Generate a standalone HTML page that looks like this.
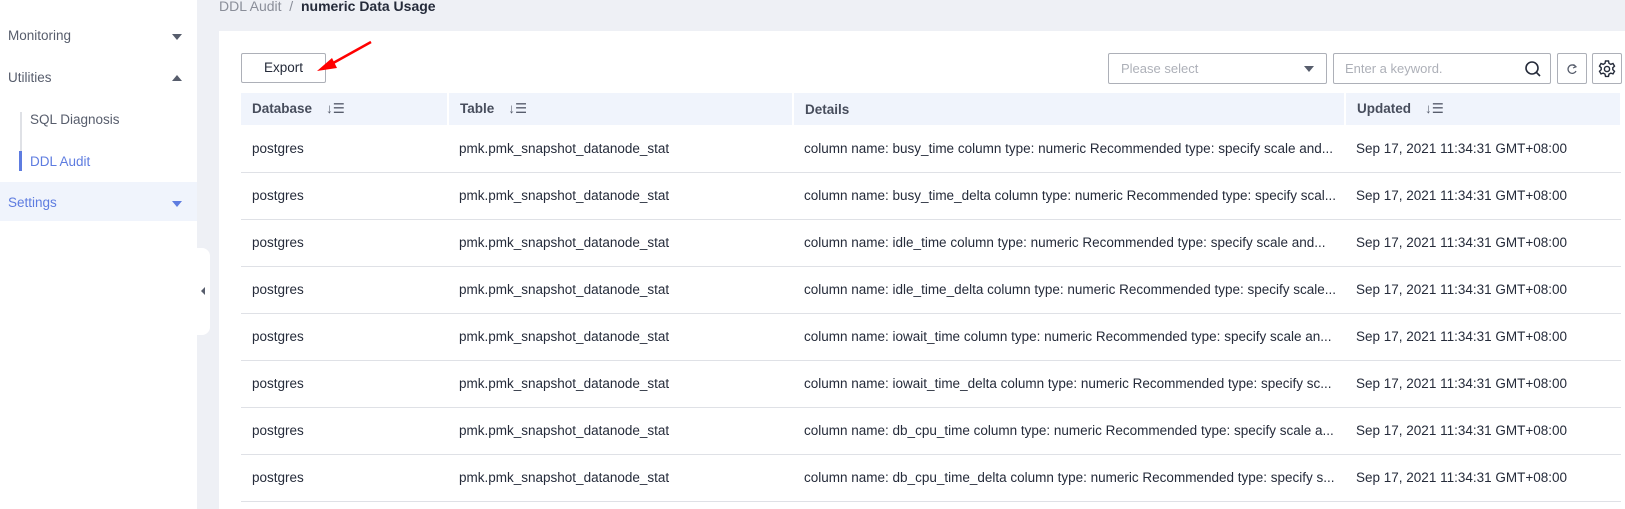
<!DOCTYPE html>
<html><head><meta charset="utf-8"><style>
*{box-sizing:border-box;margin:0;padding:0}
body{width:1625px;height:509px;overflow:hidden;background:#eef0f5;font-family:"Liberation Sans",sans-serif;color:#252b3a;position:relative;font-size:13px}
.side{position:absolute;left:0;top:0;width:197px;height:509px;background:#fff}
.mi{position:absolute;left:8px;font-size:13.5px;color:#575d6c}
.tri{position:absolute;left:172px;width:0;height:0;border-left:5px solid transparent;border-right:5px solid transparent}
.card{position:absolute;left:219px;top:31px;width:1406px;height:478px;background:#fff}
.tab{position:absolute;left:197px;top:248px;width:13px;height:87px;background:#fff;border-radius:0 8px 8px 0}
.bc{position:absolute;left:219px;top:-2px;font-size:14px;color:#8a8e99}
.bc b{color:#252b3a}
.btn{position:absolute;border:1px solid #adb0b8;border-radius:2px;background:#fff}
table{position:absolute;left:241px;top:93px;width:1381px;border-collapse:collapse;table-layout:fixed}
th{background:#f0f4fc;height:32px;text-align:left;font-weight:bold;font-size:13.5px;color:#474d5c;padding-left:11px;border-right:2px solid #fff}
td{height:47px;padding-left:11px;border-bottom:1px solid #dfe1e6;font-size:13.5px;white-space:nowrap;overflow:hidden}
.s{display:inline-block;margin-left:14px;font-weight:normal;color:#575d6c}
</style></head><body>
<div class="side">
<div class="mi" style="top:28px">Monitoring</div><div class="tri" style="top:34px;border-top:6px solid #575d6c"></div>
<div class="mi" style="top:70px">Utilities</div><div class="tri" style="top:75px;border-bottom:6px solid #575d6c"></div>
<div style="position:absolute;left:20px;top:112px;width:2px;height:58px;background:#dfe1e6"></div>
<div style="position:absolute;left:19px;top:151px;width:3px;height:20px;background:#5e7ce0"></div>
<div class="mi" style="left:30px;top:112px">SQL Diagnosis</div>
<div class="mi" style="left:30px;top:154px;color:#5e7ce0">DDL Audit</div>
<div style="position:absolute;left:0;top:182px;width:197px;height:39px;background:#f0f4fc"></div>
<div class="mi" style="top:195px;color:#5e7ce0">Settings</div><div class="tri" style="top:201px;border-top:6px solid #5e7ce0"></div>
</div>
<div class="tab"><div style="position:absolute;left:4px;top:39px;border-top:4px solid transparent;border-bottom:4px solid transparent;border-right:4px solid #575d6c"></div></div>
<div class="bc">DDL Audit &nbsp;/ &nbsp;<b>numeric Data Usage</b></div>
<div class="card"></div>
<div class="btn" style="left:241px;top:53px;width:85px;height:30px;text-align:center;line-height:28px;font-size:13.5px">Export</div>
<svg style="position:absolute;left:310px;top:36px" width="70" height="40"><line x1="61" y1="6" x2="16" y2="31" stroke="#f00" stroke-width="2.5"/><polygon points="7,35 22,22 27,32" fill="#f00"/></svg>
<div class="btn" style="left:1108px;top:53px;width:219px;height:31px;color:#adb0b8;padding:7px 12px">Please select<div style="position:absolute;right:12px;top:12px;border-left:5px solid transparent;border-right:5px solid transparent;border-top:6px solid #575d6c"></div></div>
<div class="btn" style="left:1333px;top:53px;width:218px;height:31px;color:#adb0b8;padding:7px 11px">Enter a keyword.
<svg style="position:absolute;right:8px;top:6px" width="18" height="18"><circle cx="8" cy="8" r="6" stroke="#252b3a" stroke-width="1.6" fill="none"/><line x1="12.5" y1="12.5" x2="16" y2="16" stroke="#252b3a" stroke-width="1.6"/></svg></div>
<div class="btn" style="left:1557px;top:53px;width:30px;height:31px"><svg style="position:absolute;left:8px;top:9px" width="12" height="12"><path d="M9.5 3.5A4.2 4.2 0 1 0 10 8" stroke="#575d6c" stroke-width="1.3" fill="none"/><path d="M7.5 1.5L10 3.8 7 5" stroke="#575d6c" stroke-width="1.2" fill="none"/></svg></div>
<div class="btn" style="left:1592px;top:53px;width:30px;height:31px"><svg style="position:absolute;left:4px;top:5px" width="20" height="20" viewBox="0 0 20 20"><path d="M8.5 2h3l.5 2.3 1.8 1 2.2-.8 1.5 2.6-1.7 1.6v2l1.7 1.6-1.5 2.6-2.2-.8-1.8 1-.5 2.3h-3l-.5-2.3-1.8-1-2.2.8-1.5-2.6 1.7-1.6v-2L2.5 7.1 4 4.5l2.2.8 1.8-1z" stroke="#252b3a" stroke-width="1.4" fill="none"/><circle cx="10" cy="10" r="2.6" stroke="#252b3a" stroke-width="1.4" fill="none"/></svg></div>
<table>
<colgroup><col style="width:207px"><col style="width:345px"><col style="width:552px"><col></colgroup>
<tr><th>Database<span class="s">↓☰</span></th><th>Table<span class="s">↓☰</span></th><th>Details</th><th>Updated<span class="s">↓☰</span></th></tr>
<tr><td>postgres</td><td>pmk.pmk_snapshot_datanode_stat</td><td>column name: busy_time column type: numeric Recommended type: specify scale and...</td><td>Sep 17, 2021 11:34:31 GMT+08:00</td></tr>
<tr><td>postgres</td><td>pmk.pmk_snapshot_datanode_stat</td><td>column name: busy_time_delta column type: numeric Recommended type: specify scal...</td><td>Sep 17, 2021 11:34:31 GMT+08:00</td></tr>
<tr><td>postgres</td><td>pmk.pmk_snapshot_datanode_stat</td><td>column name: idle_time column type: numeric Recommended type: specify scale and...</td><td>Sep 17, 2021 11:34:31 GMT+08:00</td></tr>
<tr><td>postgres</td><td>pmk.pmk_snapshot_datanode_stat</td><td>column name: idle_time_delta column type: numeric Recommended type: specify scale...</td><td>Sep 17, 2021 11:34:31 GMT+08:00</td></tr>
<tr><td>postgres</td><td>pmk.pmk_snapshot_datanode_stat</td><td>column name: iowait_time column type: numeric Recommended type: specify scale an...</td><td>Sep 17, 2021 11:34:31 GMT+08:00</td></tr>
<tr><td>postgres</td><td>pmk.pmk_snapshot_datanode_stat</td><td>column name: iowait_time_delta column type: numeric Recommended type: specify sc...</td><td>Sep 17, 2021 11:34:31 GMT+08:00</td></tr>
<tr><td>postgres</td><td>pmk.pmk_snapshot_datanode_stat</td><td>column name: db_cpu_time column type: numeric Recommended type: specify scale a...</td><td>Sep 17, 2021 11:34:31 GMT+08:00</td></tr>
<tr><td>postgres</td><td>pmk.pmk_snapshot_datanode_stat</td><td>column name: db_cpu_time_delta column type: numeric Recommended type: specify s...</td><td>Sep 17, 2021 11:34:31 GMT+08:00</td></tr>
</table>
</body></html>
